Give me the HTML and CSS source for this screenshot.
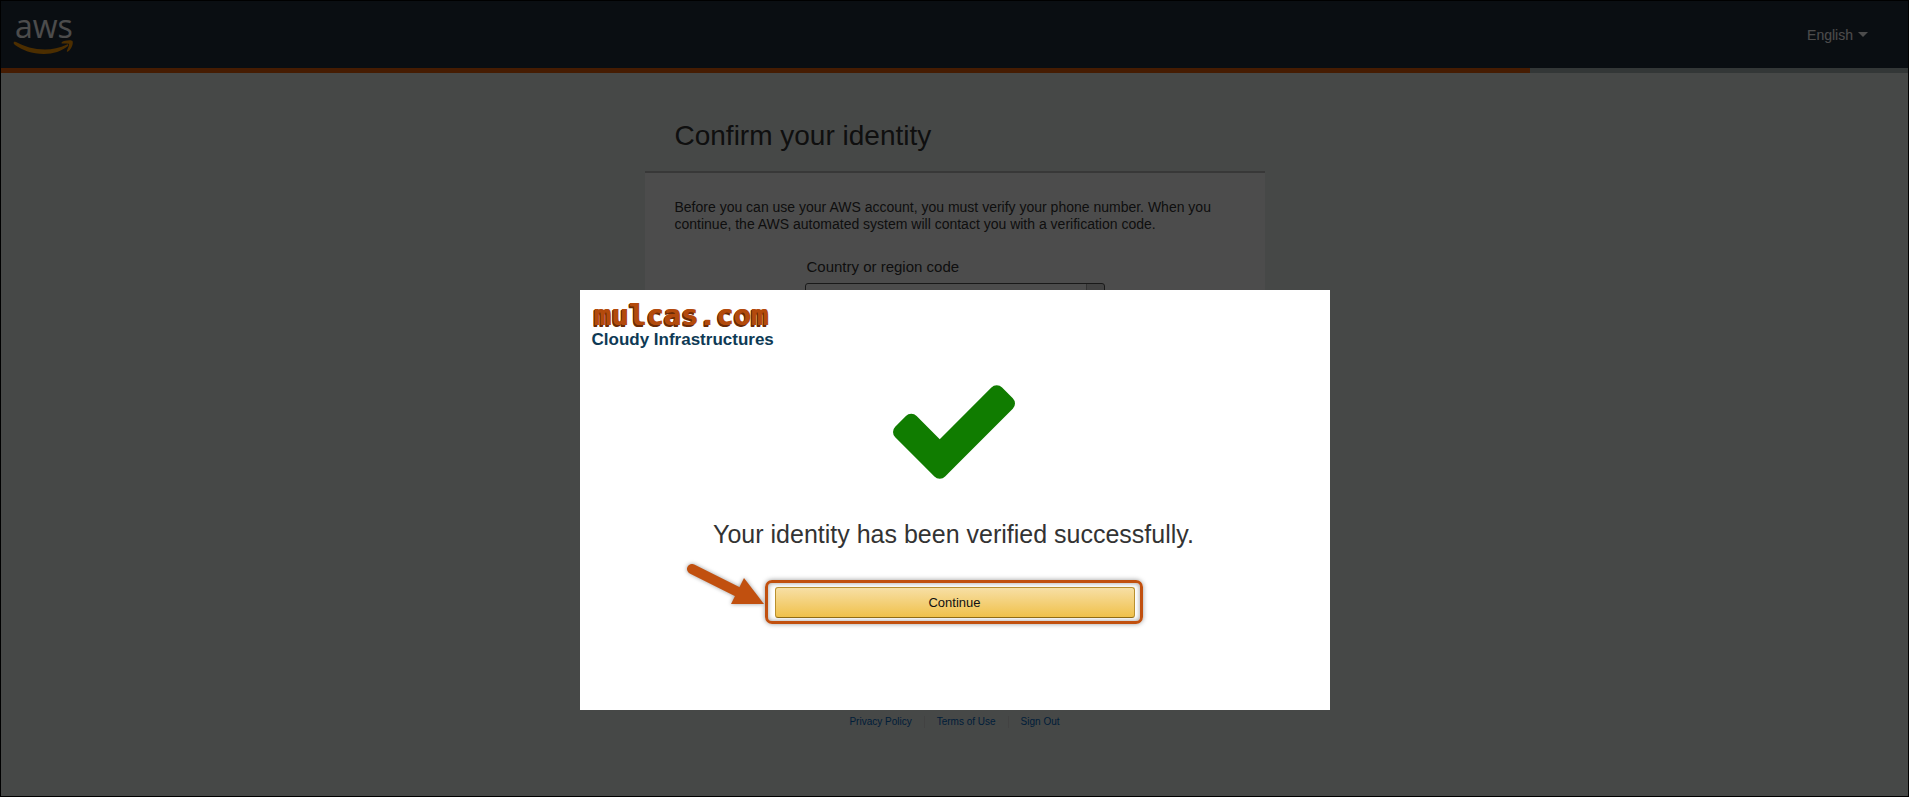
FILE: index.html
```
<!DOCTYPE html>
<html lang="en">
<head>
    <meta charset="UTF-8">
    <meta name="viewport" content="width=device-width, initial-scale=1.0">
    <title>Confirm your identity</title>
    <link rel="stylesheet" href="styles.css">
</head>
<body>
    <header class="header">
        <a class="aws-logo" href="#" aria-label="aws">
            <svg width="62" height="40" viewBox="0 0 62 40">
                <text class="aws-text" x="2" y="23">aws</text>
                <path fill="#ff9900" d="M1 27C0 28 1 29 2 30C9 35 19 39 31 39C40 39 49 36 55 31C56 30 55 29 54 29.500C47 33 39 34.500 32 34.500C21 34.500 11 31.500 3 27C2 26.500 1 26.500 1 27Z"/>
                <path fill="#ff9900" d="M49 27C51 25.500 58 24.500 59.500 26C60.500 28 59 34 55 36.500C54 37 53.500 36.500 54 35.500C55 33 56.500 30 56 29C55 28 51.500 28.500 49.500 28.500C48.500 28.500 48 28 49 27Z"/>
            </svg>
        </a>
        <button class="language" type="button">English <span class="caret"></span></button>
    </header>
    <div class="progress"><div class="progress-bar"></div></div>

    <main class="content">
        <h1>Confirm your identity</h1>
        <form class="card">
            <p>Before you can use your AWS account, you must verify your phone number. When you continue, the AWS automated system will contact you with a verification code.</p>
            <div class="input-group">
                <label for="country">Country or region code</label>
                <div class="select-box">
                    <select id="country" name="country"><option value=""></option></select>
                </div>
            </div>
        </form>
    </main>

    <footer class="footer">
        <a href="#">Privacy Policy</a>
        <a href="#">Terms of Use</a>
        <a href="#">Sign Out</a>
    </footer>

    <!-- Verification result -->
    <div class="overlay">
        <div class="modal" role="dialog" aria-labelledby="result">
            <div class="brand">
                <div class="brand-name">mulcas.com</div>
                <div class="brand-tagline">Cloudy Infrastructures</div>
            </div>
            <svg class="check" width="122" height="94" viewBox="121 334 1550 1188">
                <path fill="#107c00" d="M1671 566q0 40-28 68l-724 724-136 136q-28 28-68 28t-68-28l-136-136-362-362q-28-28-28-68t28-68l136-136q28-28 68-28t68 28l294 295 656-657q28-28 68-28t68 28l136 136q28 28 28 68z"/>
            </svg>
            <h2 id="result">Your identity has been verified successfully.</h2>
            <div class="highlight">
                <svg class="arrow" width="90" height="60" viewBox="0 0 90 60">
                    <path d="M12 17L60 41" stroke="#c1500f" stroke-width="10" stroke-linecap="round"/>
                    <path d="M64 26L84 52L51 52Z" fill="#c1500f"/>
                </svg>
                <button class="continue" type="button">Continue</button>
            </div>
        </div>
    </div>
</body>
</html>
```
FILE: styles.css
```
* {
    box-sizing: border-box;
}

body {
    position: relative;
    display: flex;
    flex-direction: column;
    min-height: 100vh;
    margin: 0;
    border: 1px solid #000;
    background-color: #eaf0ed;
    color: #333;
    font-family: "Liberation Sans", Arial, sans-serif;
    font-size: 14px;
}

h1, h2, p {
    margin: 0;
    font-weight: normal;
}

.header {
    display: flex;
    align-items: center;
    justify-content: space-between;
    height: 67px;
    padding: 0 40px 0 12px;
    background-color: #232f3e;
}

.aws-logo svg {
    display: block;
    overflow: visible;
}

.aws-text {
    fill: #fff;
    font-family: "Open Sans", sans-serif;
    font-size: 32px;
    font-weight: 500;
}

.language {
    display: flex;
    align-items: center;
    gap: 5px;
    padding: 0;
    border: 0;
    background: none;
    color: #fff;
    font: inherit;
}

.caret {
    border: 5px solid transparent;
    border-top-color: #fff;
    border-bottom: 0;
}

.progress {
    height: 5px;
    background-color: #aab7b8;
}

.progress-bar {
    width: 80.2%;
    height: 100%;
    background-color: #eb5f07;
}

.content {
    width: 620px;
    margin: 0 auto;
    padding-top: 47px;
}

h1 {
    padding: 0 30px;
    margin-bottom: 19px;
    font-size: 28px;
    line-height: 32px;
}

.card {
    min-height: 533px;
    padding: 26px 30px;
    border-top: 2px solid #bbb;
    background-color: #fff;
}

.card p {
    line-height: 17px;
}

.input-group {
    width: 300px;
    margin: 25px auto 0;
}

.input-group label {
    display: block;
    padding-left: 2px;
    font-size: 15px;
    line-height: 17px;
}

.select-box {
    margin-top: 8px;
}

select {
    width: 100%;
    height: 30px;
    appearance: none;
    border: 1px solid #555;
    border-radius: 3px;
    background: linear-gradient(to right, #aaa 1px, #ddd 1px) right / 18px 100% no-repeat #fff;
}

.footer {
    display: flex;
    justify-content: center;
    margin-top: 12px;
    font-size: 10px;
    line-height: 12px;
}

.footer a {
    padding: 0 12px;
    color: #0066c0;
    text-decoration: none;
}

.footer a + a {
    border-left: 1px solid #ddd;
}

.overlay {
    position: absolute;
    inset: 0;
    padding-top: 289px;
    background-color: rgba(0, 0, 0, 0.7);
}

.modal {
    display: flex;
    flex-direction: column;
    align-items: center;
    width: 750px;
    min-height: 420px;
    margin: 0 auto;
    padding: 12px 14px 12px 12px;
    background-color: #fff;
}

.brand {
    align-self: flex-start;
}

.brand-name {
    padding-left: 2px;
    color: #b34a0c;
    font-family: "DejaVu Sans Mono", monospace;
    font-size: 29px;
    font-weight: bold;
    line-height: 26px;
    text-shadow: 1px 0 #b34a0c, -1px 1px #6b2a05, -1px 2px #6b2a05;
}

.brand-tagline {
    color: #0e3a55;
    font-size: 17px;
    font-weight: bold;
    line-height: 24px;
}

.check {
    margin-top: 33px;
}

h2 {
    margin-top: 41px;
    font-size: 25px;
    line-height: 28px;
}

.highlight {
    position: relative;
    width: 378px;
    margin-top: 32px;
    padding: 4px 5px 3px 7px;
    border: 3px solid #c1500f;
    border-radius: 7px;
    box-shadow: 0 0 5px rgba(0, 0, 0, 0.4), inset 0 0 5px rgba(0, 0, 0, 0.4);
}

.arrow {
    position: absolute;
    top: -31px;
    left: -88px;
    filter: drop-shadow(0 0 2px rgba(0, 0, 0, 0.4));
}

.continue {
    display: block;
    width: 100%;
    height: 31px;
    border: 1px solid #b9902f;
    border-bottom-color: #8f6b14;
    border-radius: 3px;
    background: linear-gradient(#f7dfa5, #f0c14b);
    color: #111;
    font-family: inherit;
    font-size: 13px;
}
```
